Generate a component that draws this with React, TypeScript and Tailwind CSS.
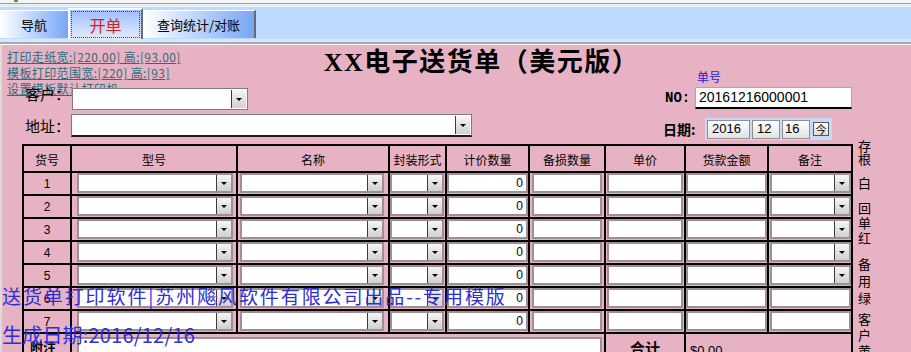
import React from 'react';

const Arrow = () => (
  <span className="block h-0 w-0 border-x-[3px] border-t-[3px] border-x-transparent border-t-black" />
);

const DropBtn = () => (
  <div className="flex w-[15px] items-center justify-center border-l border-[#3c3c3c] bg-linear-to-b from-[#f6f6f6] to-[#d0d0d0]">
    <Arrow />
  </div>
);

const Combo = () => (
  <div className="flex h-[20px] border-2 border-[#9d8f96] bg-white">
    <div className="flex-1" />
    <DropBtn />
  </div>
);

const Box = ({ value }: { value?: string }) => (
  <div className="flex h-[20px] items-center justify-end border-2 border-[#9d8f96] bg-white pr-[3px] font-['Liberation_Sans',sans-serif] text-[12px] text-black">
    {value}
  </div>
);

const headers = ['货号', '型号', '名称', '封装形式', '计价数量', '备损数量', '单价', '货款金额', '备注'];
const rows = [1, 2, 3, 4, 5, 6, 7];

const sideLabels = [
  { chars: '存根', cls: 'leading-[13px]' },
  { chars: '白', cls: 'mt-[11px] leading-[13px]' },
  { chars: '回单红', cls: 'mt-[11px] leading-[15px]' },
  { chars: '备用绿', cls: 'mt-[10px] leading-[17px]' },
  { chars: '客户黄', cls: 'mt-[5px] leading-[16px]' },
];

export default function App() {
  return (
    <div className="relative h-[352px] w-[911px] overflow-hidden bg-[#e7b3c4] font-['Noto_Sans_CJK_SC',sans-serif] text-black">
      {/* top strip + tabs */}
      <div className="h-[3px] bg-[#f3f3f3] pl-[14px]">
        <div className="h-[2px] w-[4px] bg-[#5ba02c]" />
      </div>
      <div className="h-px bg-[#a3a3a3]" />
      <div className="flex h-[35px] border-t-[3px] border-[#e5edf5] bg-[#bddbff]">
        <div className="mt-[3px] flex h-[28px] w-[68px] items-center justify-center border-t border-white bg-linear-to-r from-white to-[#78a6f5] text-[13px]">
          导航
        </div>
        <div className="mt-[1px] h-[31px] w-[75px] border-l-2 border-t-2 border-r-2 border-white border-r-[#6d6d6d] bg-linear-to-b from-[#9cbeff] to-[#e6ecf8] p-px">
          <div className="flex h-full items-center justify-center border border-dotted border-[#1f5a48] text-[16px] text-[#e8141e]">
            开单
          </div>
        </div>
        <div className="mt-[3px] flex h-[28px] w-[113px] items-center justify-center border-t border-r-2 border-white border-r-[#6a6a6a] bg-linear-to-r from-white to-[#78a6f5] text-[13px]">
          查询统计/对账
        </div>
      </div>
      <div className="h-[3px] bg-[#dae7f6]" />
      <div className="h-[2px] bg-[#a5a8b6]" />
      <div className="h-px bg-white" />

      {/* pink panel */}
      <div className="h-[307px] border-l-2 border-[#dcdcdc]">
        {/* heading area */}
        <div className="flex h-[99px]">
          <div className="w-[658px]">
            <div className="flex">
              <div className="w-[310px] pl-[5px] pt-[4px] text-[12px] leading-[16px] tracking-[0.4px] text-[#2b6d7d] underline">
                <div>打印走纸宽:[220.00] 高:[93.00]</div>
                <div>模板打印范围宽:[220] 高:[93]</div>
                <div>设置模板默认打印机</div>
              </div>
              <div className="w-[333px] pl-[6px] pt-[3px] text-center font-['Liberation_Serif','Noto_Sans_CJK_SC',serif] text-[26px] font-bold leading-[30px] tracking-[1.5px]">
                XX电子送货单（美元版）
              </div>
            </div>
            <div className="relative -mt-[9px] flex items-start">
              <div className="-mt-[3px] w-[70px] pl-[23px] text-[15px] leading-[18px]">客户：</div>
              <div className="flex h-[22px] w-[176px] border border-[#7c7c7c] bg-white p-px">
                <div className="flex-1" />
                <DropBtn />
              </div>
            </div>
            <div className="mt-[4px] flex items-center">
              <div className="w-[69px] pl-[23px] text-[15px] leading-[18px]">地址：</div>
              <div className="flex h-[23px] w-[401px] border border-[#7c7c7c] border-b-2 border-b-[#2a1418] bg-white p-px">
                <div className="flex-1" />
                <DropBtn />
              </div>
            </div>
          </div>

          <div className="w-[193px]">
            <div className="pl-[37px] pt-[24px] text-[12px] leading-[16px] text-[#1c1cd8]">单号</div>
            <div className="mt-[2px] flex h-[22px] items-center">
              <div className="w-[35px] pl-[5px] font-['Liberation_Mono',monospace] text-[14px] font-bold leading-[14px]">NO:</div>
              <div className="flex h-[22px] w-[157px] items-center border-x border-t border-[#a9a9a9] border-b-2 border-b-black bg-white pl-[3px] font-['Liberation_Sans',sans-serif] text-[14px]">
                20161216000001
              </div>
            </div>
            <div className="mt-[9px] flex h-[22px] items-center">
              <div className="w-[45px] pl-[3px] text-[14px] font-bold">日期:</div>
              <div className="flex h-[22px] w-[127px] items-center gap-[2px] bg-[#c5dbf7] pl-[2px] font-['Liberation_Sans',sans-serif] text-[13px]">
                <div className="flex h-[19px] w-[43px] items-center border border-[#8e8e8e] bg-linear-to-b from-white to-[#e2e2e2] pl-[4px]">2016</div>
                <div className="flex h-[19px] w-[28px] items-center border border-[#8e8e8e] bg-linear-to-b from-white to-[#e2e2e2] pl-[4px]">12</div>
                <div className="flex h-[19px] w-[28px] items-center border border-[#8e8e8e] bg-linear-to-b from-white to-[#e2e2e2] pl-[2px]">16</div>
                <div className="ml-[1px] flex h-[14px] w-[16px] items-center justify-center border border-[#555] bg-linear-to-b from-white to-[#dcdcdc] font-['Noto_Sans_CJK_SC',sans-serif] text-[11px] leading-none">
                  今
                </div>
              </div>
            </div>
          </div>
        </div>

        {/* table + side labels */}
        <div className="flex pl-[20px]">
          <div className="grid grid-cols-[46px_164px_150px_55px_81px_74px_78px_81px_82px] grid-rows-[25px_repeat(7,21px)_60px] gap-[2px] border-2 border-black bg-black">
            {headers.map((h) => (
              <div key={h} className="flex items-center justify-center bg-[#e7b3c4] pt-[2px] text-[12px]">
                {h}
              </div>
            ))}
            {rows.map((r) => (
              <React.Fragment key={r}>
                <div className="flex items-center justify-center bg-[#e7b3c4] font-['Liberation_Sans',sans-serif] text-[12px]">{r}</div>
                <div className="bg-[#e7b3c4] pl-[5px] pr-[3px]"><Combo /></div>
                <div className="bg-[#e7b3c4] pl-[2px] pr-[4px]"><Combo /></div>
                <div className="bg-[#e7b3c4] pr-px"><Combo /></div>
                <div className="bg-[#e7b3c4]"><Box value="0" /></div>
                <div className="bg-[#e7b3c4] px-[2px]"><Box /></div>
                <div className="bg-[#e7b3c4] px-px"><Box /></div>
                <div className="bg-[#e7b3c4]"><Box /></div>
                <div className="bg-[#e7b3c4] pl-px">{r <= 5 ? <Combo /> : <Box />}</div>
              </React.Fragment>
            ))}
            <div className="bg-[#e7b3c4] pl-[6px] pt-[3px] text-[13px] font-bold">附注</div>
            <div className="col-span-5 bg-[#e7b3c4] pl-[5px] pr-[2px] pt-[3px]">
              <div className="h-[50px] border-2 border-[#9d8f96] bg-white" />
            </div>
            <div className="bg-[#e7b3c4] pt-[3px] text-center text-[15px] font-bold">合计</div>
            <div className="col-span-2 bg-[#e7b3c4] pl-[4px] pt-[7px] font-['Liberation_Sans',sans-serif] text-[13px]">$0.00</div>
          </div>

          <div className="-mt-[5px] ml-[5px] flex w-[14px] flex-col text-[13px]">
            {sideLabels.map((g) => (
              <div key={g.chars} className={`flex flex-col ${g.cls}`}>
                {[...g.chars].map((c, i) => (
                  <span key={i}>{c}</span>
                ))}
              </div>
            ))}
          </div>
        </div>
      </div>

      {/* watermark text over the form */}
      <div className="pointer-events-none absolute left-[2px] top-[286px] whitespace-nowrap text-[19px] leading-[19px] tracking-[1.9px] text-[#2f2fd3]">
        送货单打印软件|苏州飚风软件有限公司出品--专用模版
      </div>
      <div className="pointer-events-none absolute left-[2px] top-[325px] whitespace-nowrap text-[20px] leading-[20px] tracking-[0.2px] text-[#2f2fd3]">
        生成日期:2016/12/16
      </div>
    </div>
  );
}
